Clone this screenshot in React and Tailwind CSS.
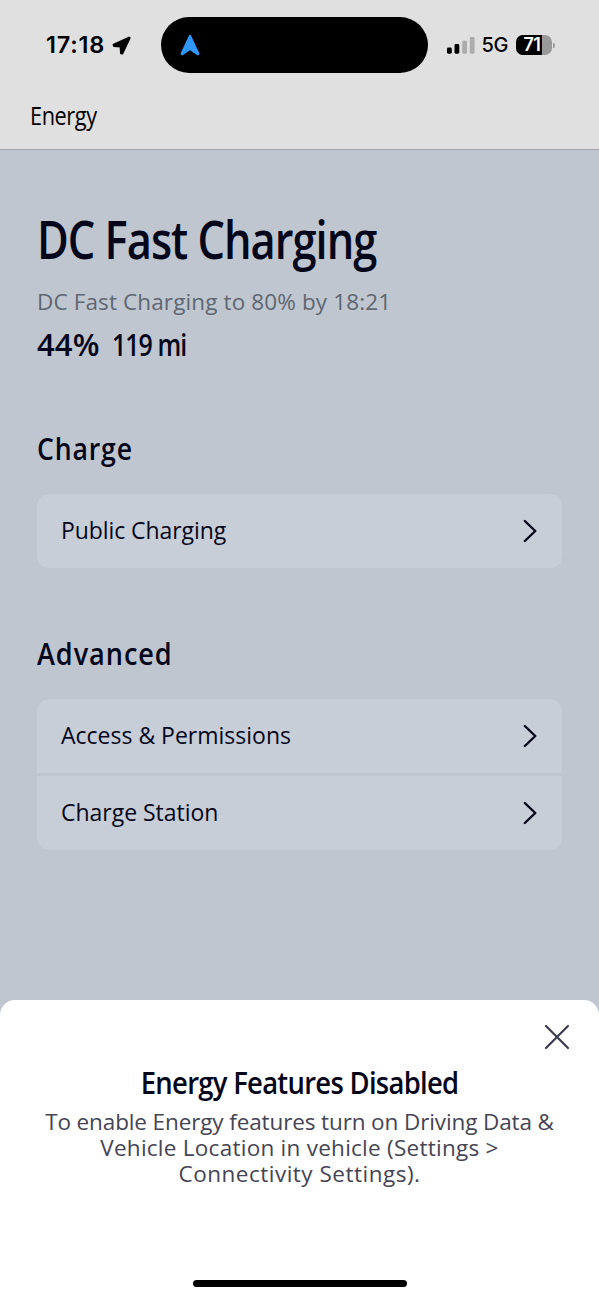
import React from 'react';

const ADVANCED_ITEMS = [
    { label: 'Access & Permissions', className: 'tracking-[0px]' },
    { label: 'Charge Station', className: 'tracking-[-0.02px]' },
];

function Chevron() {
    return (
        <svg width="16" height="24" viewBox="0 0 16 24" fill="none" stroke="#05061a" strokeWidth="2.4" strokeLinecap="round" strokeLinejoin="round">
            <path d="M2.8 2 L13.3 12 L2.8 22" />
        </svg>
    );
}

function StatusBar() {
    return (
        <div className="h-[89px] pt-[17px] flex items-start">
            <div className="w-[161px] h-14 shrink-0 flex items-center pl-[46px] font-['Inter']">
                <span className="w-[59px] text-[23.5px] font-semibold tracking-[0.8px] whitespace-nowrap">17:18</span>
                <svg className="ml-[7px] shrink-0" width="19" height="19" viewBox="0 0 19 19">
                    <path d="M17.2 1.6 L1.6 8.6 L2 9.9 L8.6 10.4 L9 17.2 L10.3 17.6 L17.6 2Z" fill="#000" stroke="#000" strokeWidth="2" strokeLinejoin="round" />
                </svg>
            </div>

            {/* Dynamic island with the navigation arrow */}
            <div className="w-[267px] h-14 shrink-0 rounded-full bg-black flex items-center pl-[19px]">
                <svg width="20" height="22" viewBox="0 0 20 22">
                    <path d="M10 .8 C9.2 .8 8.9 1.5 8.6 2.2 L.8 19.1 C.2 20.7 1.5 22 3 21.1 L10 16.2 L17 21.1 C18.5 22 19.8 20.7 19.2 19.1 L11.4 2.2 C11.1 1.5 10.8 .8 10 .8Z" fill="#2f96fb" />
                </svg>
            </div>

            <div className="h-14 flex items-center pl-[19px] font-['Inter']">
                <svg width="28" height="17" viewBox="0 0 28 17">
                    <rect x="0" y="10.5" width="4.8" height="6.2" rx="1.4" fill="#000" />
                    <rect x="7.5" y="7" width="4.8" height="9.7" rx="1.4" fill="#000" />
                    <rect x="15.2" y="3.7" width="4.8" height="13" rx="1.4" fill="#acacac" />
                    <rect x="22.8" y="0" width="4.8" height="16.7" rx="1.4" fill="#acacac" />
                </svg>
                <span className="ml-[6.5px] w-[27px] text-[20px] font-medium tracking-[-0.3px] whitespace-nowrap">5G</span>
                <div className="ml-[7px] w-9 h-5 rounded-[7px] bg-[#999] overflow-hidden flex">
                    <div className="w-[26px] h-5 bg-black text-white text-[18px] leading-5 font-semibold tracking-[-0.5px] pl-[8px] whitespace-nowrap">71</div>
                </div>
                <div className="ml-[1.5px] w-[2px] h-[5px] rounded-r-full bg-[#999]" />
            </div>
        </div>
    );
}

function Row({ label, className }) {
    return (
        <button className="w-full h-[74px] flex items-center justify-between pl-[24px] pr-[24px] bg-[#c8ced7]">
            <span className={`pb-0.5 text-[23px] leading-8 whitespace-nowrap ${className}`}>{label}</span>
            <Chevron />
        </button>
    );
}

function Sheet() {
    return (
        <div className="h-[300px] shrink-0 rounded-t-[15px] bg-white flex flex-col items-center relative">
            <button className="absolute right-[29px] top-[24px]">
                <svg width="26" height="26" viewBox="0 0 26 26" stroke="#3c3c4a" strokeWidth="2.2" strokeLinecap="round">
                    <path d="M2 2 L24 24 M24 2 L2 24" />
                </svg>
            </button>
            <h3 className="mt-[62px] h-10 text-[31.5px] leading-10 font-semibold tracking-[-0.8px] whitespace-nowrap scale-x-[0.87] text-[#05061a]">
                Energy Features Disabled
            </h3>
            <p className="mt-[7px] text-center text-[22.5px] leading-[26px] text-[#454553] whitespace-nowrap">
                <span className="block tracking-[-0.12px]">To enable Energy features turn on Driving Data &amp;</span>
                <span className="block tracking-[0.26px]">Vehicle Location in vehicle (Settings &gt;</span>
                <span className="block tracking-[0.5px]">Connectivity Settings).</span>
            </p>
            <div className="mt-auto mb-[13px] w-[214px] h-[7px] rounded-full bg-black" />
        </div>
    );
}

export default function App() {
    return (
        <div className="w-[599px] h-[1300px] flex flex-col overflow-hidden bg-[#bfc6d0] text-[#05061a] font-['Open_Sans',sans-serif]">
            <header className="h-[150px] shrink-0 bg-[#e0e0e0] border-b border-[#a3a6ab] text-black">
                <StatusBar />
                <div className="pl-[30px] pt-[8px]">
                    <h2 className="w-fit text-[25px] leading-9 font-medium tracking-[-0.5px] origin-left scale-x-[0.87]">Energy</h2>
                </div>
            </header>

            <main className="flex-1 px-[37px] pt-[57px] bg-[#bfc6d0]">
                <h1 className="w-fit h-16 text-[52px] leading-[64px] font-semibold tracking-[-1.2px] whitespace-nowrap origin-left scale-x-[0.835]">DC Fast Charging</h1>
                <p className="mt-[15px] text-[22.5px] leading-8 tracking-[0.12px] text-[#5f6772] whitespace-nowrap">DC Fast Charging to 80% by 18:21</p>
                <div className="mt-[6px] flex text-[31px] leading-10 font-semibold whitespace-nowrap">
                    <span className="w-[75px] tracking-[0.1px] origin-left">44%</span>
                    <span className="tracking-[-1.2px] origin-left scale-x-[0.805]">119 mi</span>
                </div>

                <h2 className="mt-[64px] w-fit text-[31.5px] leading-10 font-semibold tracking-[1px] origin-left scale-x-[0.845]">Charge</h2>
                <div className="mt-[26px] rounded-xl overflow-hidden">
                    <Row label="Public Charging" className="tracking-[-0.08px]" />
                </div>

                <h2 className="mt-[65px] w-fit text-[31.5px] leading-10 font-semibold tracking-[1.1px] origin-left scale-x-[0.86]">Advanced</h2>
                <div className="mt-[26px] rounded-xl overflow-hidden flex flex-col gap-[3px]">
                    {ADVANCED_ITEMS.map((item) => (
                        <Row key={item.label} {...item} />
                    ))}
                </div>
            </main>

            <Sheet />
        </div>
    );
}
